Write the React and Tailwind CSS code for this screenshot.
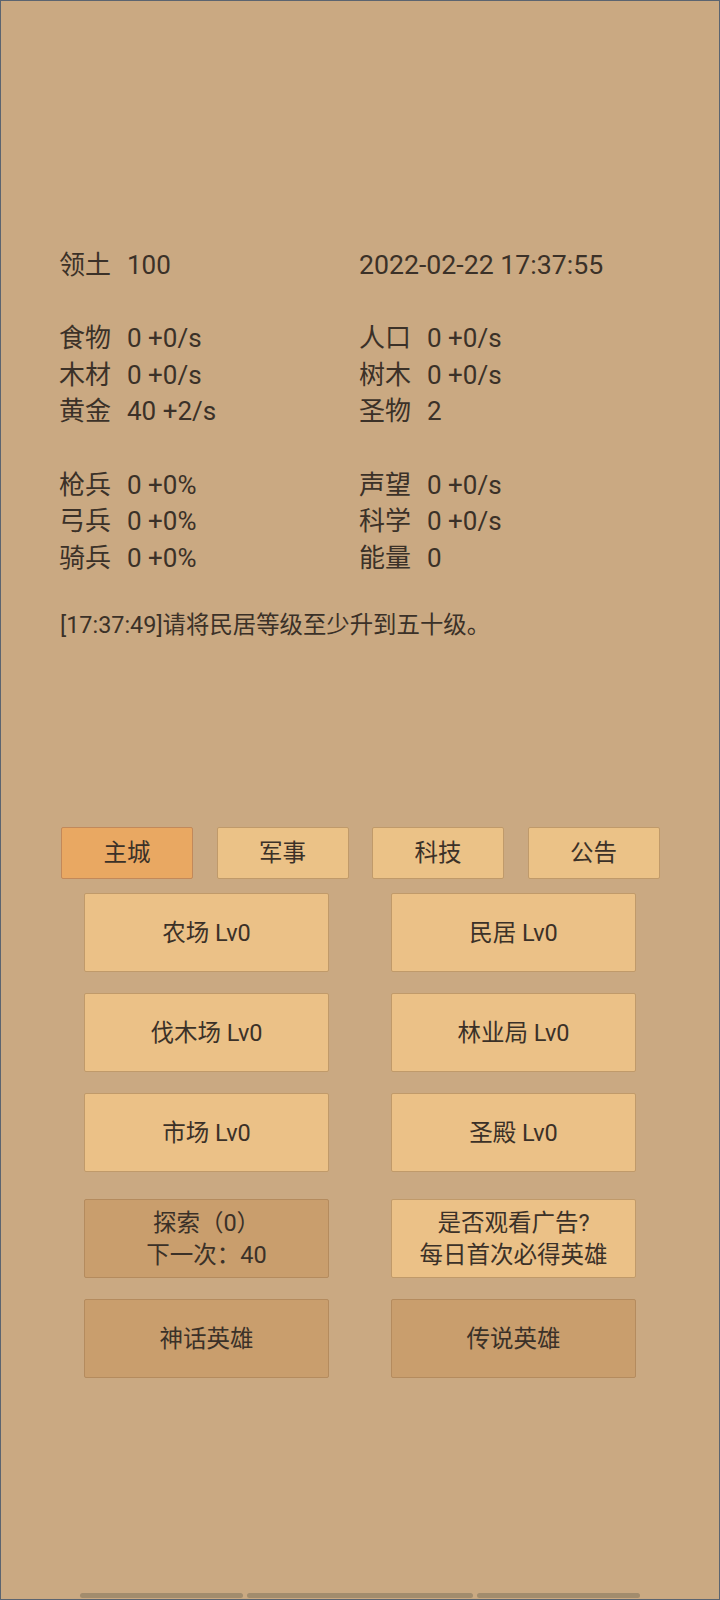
import React from "react";

const leftRows = [
  ["领土", "100"],
  null,
  ["食物", "0 +0/s"],
  ["木材", "0 +0/s"],
  ["黄金", "40 +2/s"],
  null,
  ["枪兵", "0 +0%"],
  ["弓兵", "0 +0%"],
  ["骑兵", "0 +0%"],
];

const rightRows = [
  "date",
  null,
  ["人口", "0 +0/s"],
  ["树木", "0 +0/s"],
  ["圣物", "2"],
  null,
  ["声望", "0 +0/s"],
  ["科学", "0 +0/s"],
  ["能量", "0"],
];

const tabs = ["主城", "军事", "科技", "公告"];
const buildings = ["农场 Lv0", "民居 Lv0", "伐木场 Lv0", "林业局 Lv0", "市场 Lv0", "圣殿 Lv0"];

function Stat({ row }) {
  if (!row) return <div className="h-[36.6px]" />;
  if (row === "date") {
    return <div className="h-[36.6px] text-[26.7px]">2022-02-22 17:37:55</div>;
  }
  return (
    <div className="h-[36.6px] flex">
      <span className="w-[68px]">{row[0]}</span>
      <span>{row[1]}</span>
    </div>
  );
}

function Btn({ children, dark }) {
  return (
    <div
      className={
        "h-[79px] flex flex-col items-center justify-center rounded-[2px] border text-[23.5px] leading-[32px] " +
        (dark ? "bg-[#c99e6d] border-[#b48b5e]" : "bg-[#ebc187] border-[#c09a6a]")
      }
    >
      {children}
    </div>
  );
}

export default function App() {
  return (
    <div className="w-[720px] h-[1600px] bg-[#caa982] border border-[#5b6470] flex flex-col text-[#3b3128] font-['Roboto','Noto_Sans_CJK_SC',sans-serif]">
      {/* stats */}
      <div className="pt-[246px] pl-[58px] grid grid-cols-[300px_1fr] text-[26px] leading-[36.6px]">
        <div>
          {leftRows.map((r, i) => (
            <Stat key={i} row={r} />
          ))}
        </div>
        <div>
          {rightRows.map((r, i) => (
            <Stat key={i} row={r} />
          ))}
        </div>
      </div>

      <div className="pl-[59px] mt-[33px] text-[23.4px] leading-[32px]">
        [17:37:49]请将民居等级至少升到五十级。
      </div>

      {/* tabs */}
      <div className="mt-[186px] pl-[60px] flex gap-[23.5px]">
        {tabs.map((t, i) => (
          <div
            key={t}
            className={
              "w-[132px] h-[52px] flex items-center justify-center rounded-[2px] border text-[23.5px] " +
              (i === 0 ? "bg-[#e9a862] border-[#c2895a]" : "bg-[#ebc287] border-[#c09a6a]")
            }
          >
            {t}
          </div>
        ))}
      </div>

      {/* buildings */}
      <div className="mt-[14px] ml-[83px] grid grid-cols-[245px_245px] gap-x-[62px] gap-y-[21px]">
        {buildings.map((b) => (
          <Btn key={b}>{b}</Btn>
        ))}
      </div>

      <div className="mt-[27px] ml-[83px] grid grid-cols-[245px_245px] gap-x-[62px] gap-y-[21px]">
        <Btn dark>
          <span>探索（0）</span>
          <span>下一次：40</span>
        </Btn>
        <Btn>
          <span>是否观看广告?</span>
          <span>每日首次必得英雄</span>
        </Btn>
        <Btn dark>神话英雄</Btn>
        <Btn dark>传说英雄</Btn>
      </div>

      {/* scrollbar */}
      <div className="mt-auto mb-[1px] ml-[79px] flex gap-[4px]">
        <div className="w-[163px] h-[5px] rounded-full bg-[#a28c6d]" />
        <div className="w-[226px] h-[5px] rounded-full bg-[#a28c6d]" />
        <div className="w-[163px] h-[5px] rounded-full bg-[#a28c6d]" />
      </div>
    </div>
  );
}
